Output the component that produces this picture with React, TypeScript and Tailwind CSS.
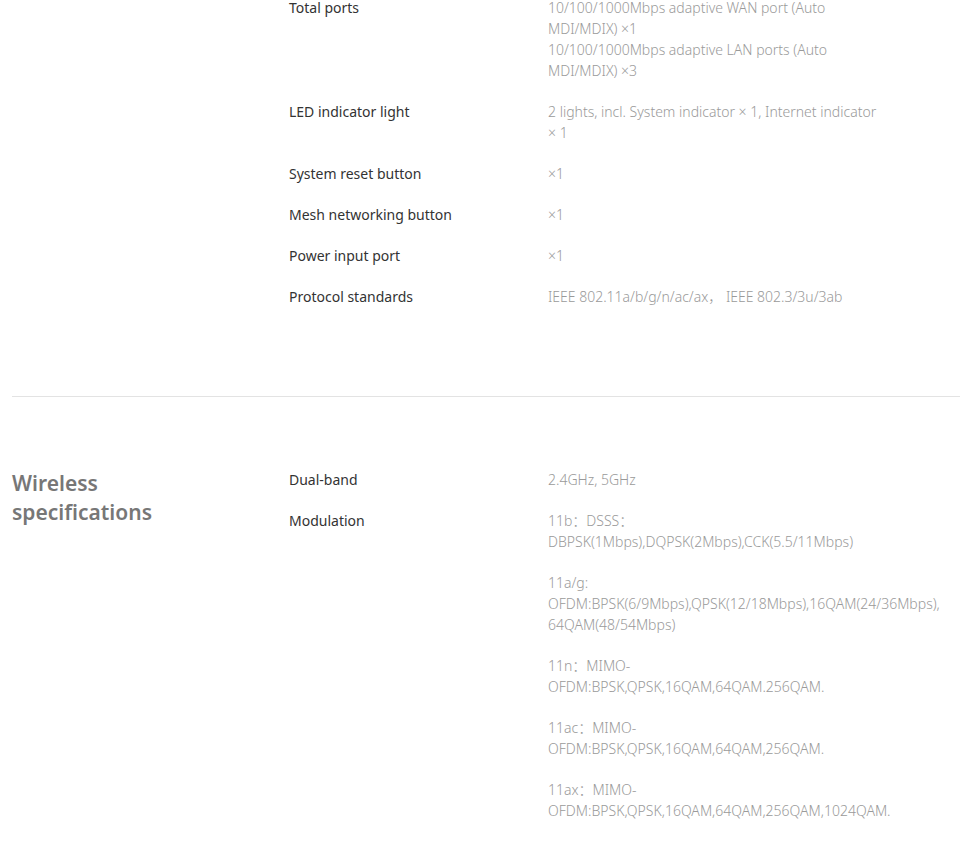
type Spec = { label: string; blocks: string[][] };

const general: Spec[] = [
  {
    label: "Total ports",
    blocks: [
      [
        "10/100/1000Mbps adaptive WAN port (Auto",
        "MDI/MDIX) ×1",
        "10/100/1000Mbps adaptive LAN ports (Auto",
        "MDI/MDIX) ×3",
      ],
    ],
  },
  {
    label: "LED indicator light",
    blocks: [["2 lights, incl. System indicator × 1, Internet indicator", "× 1"]],
  },
  { label: "System reset button", blocks: [["×1"]] },
  { label: "Mesh networking button", blocks: [["×1"]] },
  { label: "Power input port", blocks: [["×1"]] },
  { label: "Protocol standards", blocks: [["IEEE 802.11a/b/g/n/ac/ax， IEEE 802.3/3u/3ab"]] },
];

const wireless: Spec[] = [
  { label: "Dual-band", blocks: [["2.4GHz, 5GHz"]] },
  {
    label: "Modulation",
    blocks: [
      ["11b：DSSS：", "DBPSK(1Mbps),DQPSK(2Mbps),CCK(5.5/11Mbps)"],
      ["11a/g:", "OFDM:BPSK(6/9Mbps),QPSK(12/18Mbps),16QAM(24/36Mbps),", "64QAM(48/54Mbps)"],
      ["11n：MIMO-", "OFDM:BPSK,QPSK,16QAM,64QAM.256QAM."],
      ["11ac：MIMO-", "OFDM:BPSK,QPSK,16QAM,64QAM,256QAM."],
      ["11ax：MIMO-", "OFDM:BPSK,QPSK,16QAM,64QAM,256QAM,1024QAM."],
    ],
  },
];

function Row({ spec }: { spec: Spec }) {
  return (
    <div className="flex">
      <div className="w-[259px] shrink-0 text-[14px] leading-[21px] text-[#333]">{spec.label}</div>
      <div className="flex flex-col gap-5 text-[14px] leading-[21px] font-light text-[#9a9a9a]">
        {spec.blocks.map((b, i) => (
          <div key={i}>
            {b.map((line, j) => (
              <div key={j} className="whitespace-nowrap">
                {line}
              </div>
            ))}
          </div>
        ))}
      </div>
    </div>
  );
}

function Section({ title, specs }: { title?: string[]; specs: Spec[] }) {
  return (
    <div className="flex">
      <div className="w-[277px] shrink-0 text-[21px] leading-[29px] font-semibold text-[#777]">
        {title?.map((t) => <div key={t}>{t}</div>)}
      </div>
      <div className="flex flex-col gap-5">
        {specs.map((s) => (
          <Row key={s.label} spec={s} />
        ))}
      </div>
    </div>
  );
}

export default function App() {
  return (
    <div className="min-h-[865px] bg-white pl-3 font-['Noto_Sans','Noto_Sans_CJK_SC',sans-serif] overflow-hidden">
      <div className="-mt-[3px]">
        <Section specs={general} />
      </div>
      <div className="mt-[89px] border-t border-[#e3e3e3]" />
      <div className="pt-[72px]">
        <Section title={["Wireless", "specifications"]} specs={wireless} />
      </div>
    </div>
  );
}
